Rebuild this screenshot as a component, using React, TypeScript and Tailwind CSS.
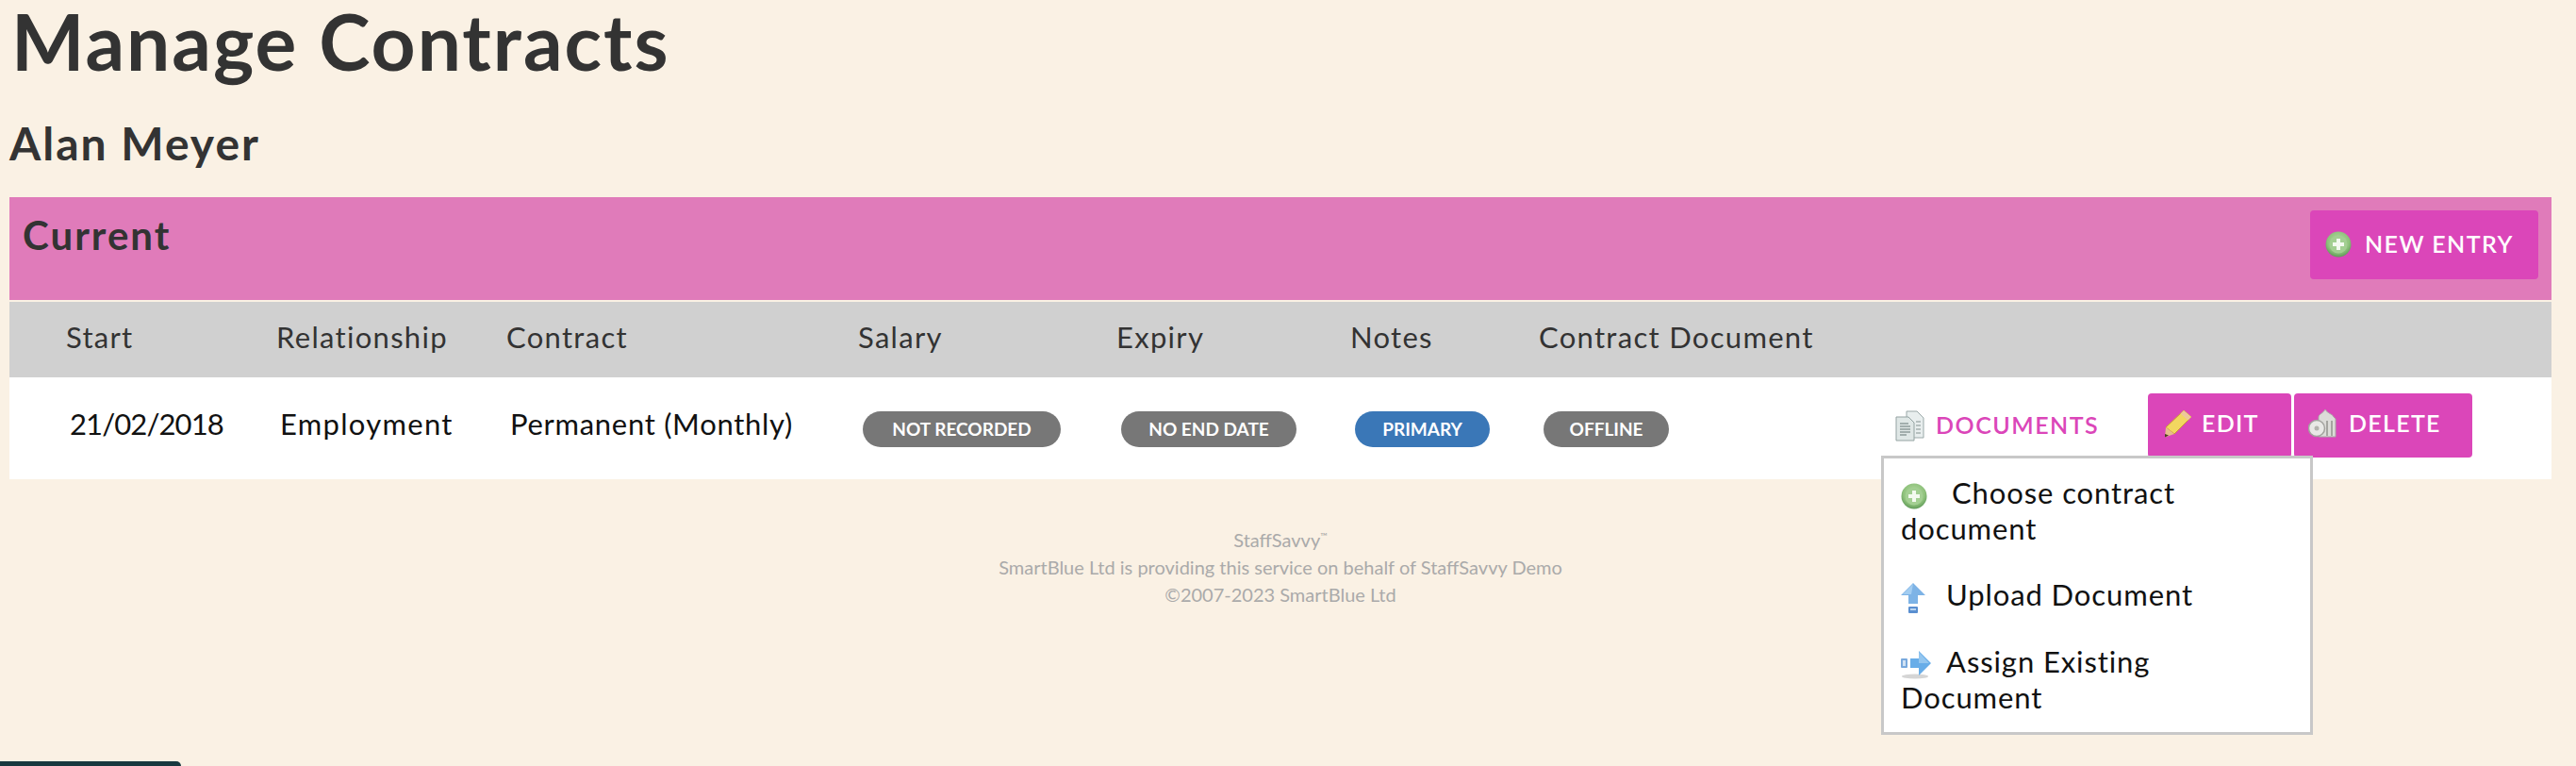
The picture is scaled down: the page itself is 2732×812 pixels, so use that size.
import { useId } from "react";

function PlusIcon({ className }: { className?: string }) {
  const id = useId();
  return (
    <svg viewBox="0 0 28 28" className={className}>
      <defs>
        <radialGradient id={id} cx="50%" cy="40%" r="60%">
          <stop offset="0%" stopColor="#b9dca6" />
          <stop offset="70%" stopColor="#8fc27c" />
          <stop offset="100%" stopColor="#5f9a58" />
        </radialGradient>
      </defs>
      <circle cx="14" cy="14" r="13.5" fill={`url(#${id})`} />
      <circle cx="14" cy="14" r="9.500" fill="#a3cf92" />
      <path d="M12 8h4v4h4v4h-4v4h-4v-4H8v-4h4z" fill="#f4faf0" />
    </svg>
  );
}

function DocsIcon({ className }: { className?: string }) {
  return (
    <svg viewBox="0 0 31 33" className={className}>
      <path d="M12 1h11l7 7v21H12z" fill="#e8eeee" stroke="#9aa8a8" />
      <path d="M1 7h13l6 6v19H1z" fill="#dfe7e6" stroke="#94a3a2" />
      <path d="M5 14h9M5 17h11M5 20h11M5 23h11M5 26h7" stroke="#8f9c9b" strokeWidth="1.5" />
      <path d="M22 12h5M22 16h5M22 20h5M22 24h5" stroke="#a5b1b0" strokeWidth="1.5" />
    </svg>
  );
}

function PencilIcon({ className }: { className?: string }) {
  return (
    <svg viewBox="0 0 30 30" className={className}>
      <path d="M21 1l8 7L11 26l-9-7z" fill="#f2d760" stroke="#c79a33" />
      <path d="M21 1l8 7-3.500 3.500-8-7z" fill="#eec79a" />
      <path d="M2 19l9 7-10 3.500z" fill="#e7bd8b" />
      <path d="M1 26l4 1.500-4 2z" fill="#4c3a22" />
    </svg>
  );
}

function TrashIcon({ className }: { className?: string }) {
  return (
    <svg viewBox="0 0 30 32" className={className}>
      <path d="M11 9c0-3 5-4 7-8 2 4 8 5 9 8l2 2v19H11z" fill="#dcdcd8" stroke="#a9a9a5" />
      <path d="M20 13v16M25 13v16" stroke="#a5a5a0" strokeWidth="2" />
      <circle cx="9" cy="21" r="8.500" fill="#e9e9e6" stroke="#a3a39f" strokeWidth="1.5" />
      <circle cx="9" cy="21" r="2.500" fill="#b3b3ae" />
    </svg>
  );
}

function UpArrowIcon({ className }: { className?: string }) {
  return (
    <svg viewBox="0 0 26 32" className={className}>
      <path d="M13 0l13 13h-8v9H8v-9H0z" fill="#7db3e6" />
      <path d="M13 1L2 12h9z" fill="#a3cdf1" />
      <rect x="8" y="25" width="10" height="7" rx="1" fill="#5a8fd0" />
      <rect x="10" y="27" width="6" height="2" fill="#b9d4f0" />
    </svg>
  );
}

function RightArrowIcon({ className }: { className?: string }) {
  return (
    <svg viewBox="0 0 32 30" className={className}>
      <ellipse cx="15" cy="27" rx="14" ry="2.500" fill="#d5d5d5" />
      <path d="M19 0l13 13-13 13v-8H10V8h9z" fill="#68ade8" />
      <path d="M19 1l11 12H19z" fill="#94c6ef" />
      <rect x="0" y="8" width="7" height="10" rx="1" fill="#79a9dd" />
      <rect x="2" y="10" width="3" height="6" fill="#d0e2f4" />
    </svg>
  );
}

const headers = ["Start", "Relationship", "Contract", "Salary", "Expiry", "Notes", "Contract Document"];

function Badge({ label, blue, width }: { label: string; blue?: boolean; width: string }) {
  return (
    <div className="mt-[8px] flex pl-[5px]">
      <span
        className={`flex h-[38px] items-center justify-center rounded-[19px] text-[19px] font-bold text-white ${width} ${
          blue ? "bg-[#3a77b7]" : "bg-[#777777]"
        }`}
      >
        {label}
      </span>
    </div>
  );
}

export default function App() {
  const cols = "grid grid-cols-[223px_244px_373px_274px_248px_200px_378px_268px_auto] items-center pb-[6px] pl-[60px]";
  return (
    <div className="relative h-[812px] overflow-hidden bg-[#faf1e4] font-[Lato,sans-serif] text-[#333333]">
      <div className="pl-[10px] pr-[26px]">
        <h1 className="h-[106px] pl-[2px] text-[82px] font-bold leading-[86px] tracking-[2px]">Manage Contracts</h1>
        <h2 className="h-[103px] pt-[18px] text-[48px] font-bold leading-[56px] tracking-[2px]">Alan Meyer</h2>

        <div className="flex h-[109px] items-start justify-between bg-[#e07bba] pl-[14px] pr-[14px] pt-[14px]">
          <h3 className="pt-[3px] text-[42px] font-bold leading-[46px] tracking-[2px]">Current</h3>
          <button className="flex h-[73px] w-[242px] items-center gap-[14px] rounded-[4px] bg-[#db46b9] pb-[2px] pl-[16px] text-[25px] font-semibold tracking-[1.4px] text-white">
            <PlusIcon className="h-[28px] w-[28px] blur-[0.4px]" />
            NEW ENTRY
          </button>
        </div>

        <div className={`mt-[2px] h-[80px] bg-[#d0d0d0] text-[31px] tracking-[1.3px] ${cols}`}>
          {headers.map((h) => (
            <div key={h} className="whitespace-nowrap">
              {h}
            </div>
          ))}
        </div>

        <div className={`h-[108px] bg-white text-[31px] text-[#111111] ${cols}`}>
          <div className="pb-[3px] pl-[4px] tracking-[-0.9px]">21/02/2018</div>
          <div className="pb-[3px] pl-[4px] tracking-[1.3px]">Employment</div>
          <div className="pb-[3px] pl-[4px] tracking-[0.7px]">Permanent (Monthly)</div>
          <Badge label="NOT RECORDED" width="w-[210px]" />
          <Badge label="NO END DATE" width="w-[186px]" />
          <Badge label="PRIMARY" blue width="w-[143px]" />
          <Badge label="OFFLINE" width="w-[133px]" />
          <div className="relative flex items-center gap-[12px] text-[25px] font-semibold tracking-[1.5px] text-[#db46b9]">
            <DocsIcon className="h-[33px] w-[31px] blur-[0.4px]" />
            DOCUMENTS
            <div className="absolute left-[-15px] top-[51px] z-10 h-[296px] w-[458px] border-[3px] border-[#c8c8c8] bg-white pl-[18px] pr-[40px] pt-[17px] text-[31px] font-normal leading-[38px] tracking-[0.9px] text-[#111111]">
              <div>
                <PlusIcon className="mr-[26px] inline-block h-[28px] w-[28px] align-[-6px] blur-[0.4px]" />
                Choose contract document
              </div>
              <div className="mt-[32px]">
                <UpArrowIcon className="mr-[22px] inline-block h-[32px] w-[26px] align-[-8px] blur-[0.4px]" />
                Upload Document
              </div>
              <div className="mt-[32px]">
                <RightArrowIcon className="mr-[16px] inline-block h-[30px] w-[32px] align-[-7px] blur-[0.4px]" />
                Assign Existing Document
              </div>
            </div>
          </div>
          <div className="flex gap-[3px] text-[25px] font-semibold tracking-[1.3px] text-white">
            <button className="flex h-[68px] w-[152px] items-center gap-[10px] rounded-[4px] bg-[#db46b9] pb-[4px] pl-[17px]">
              <PencilIcon className="h-[30px] w-[30px] blur-[0.4px]" />
              EDIT
            </button>
            <button className="flex h-[68px] w-[189px] items-center gap-[13px] rounded-[4px] bg-[#db46b9] pb-[4px] pl-[15px]">
              <TrashIcon className="h-[32px] w-[30px] blur-[0.4px]" />
              DELETE
            </button>
          </div>
        </div>

        <footer className="mt-[50px] text-center text-[20px] leading-[29px] text-[#aaaaaa]">
          <p>
            StaffSavvy<span className="relative top-[-8px] text-[10px] leading-[0]">™</span>
          </p>
          <p>SmartBlue Ltd is providing this service on behalf of StaffSavvy Demo</p>
          <p>©2007-2023 SmartBlue Ltd</p>
        </footer>
      </div>

      <div className="absolute bottom-0 left-0 h-[5px] w-[192px] rounded-tr-[6px] bg-[#17393f]" />
    </div>
  );
}
